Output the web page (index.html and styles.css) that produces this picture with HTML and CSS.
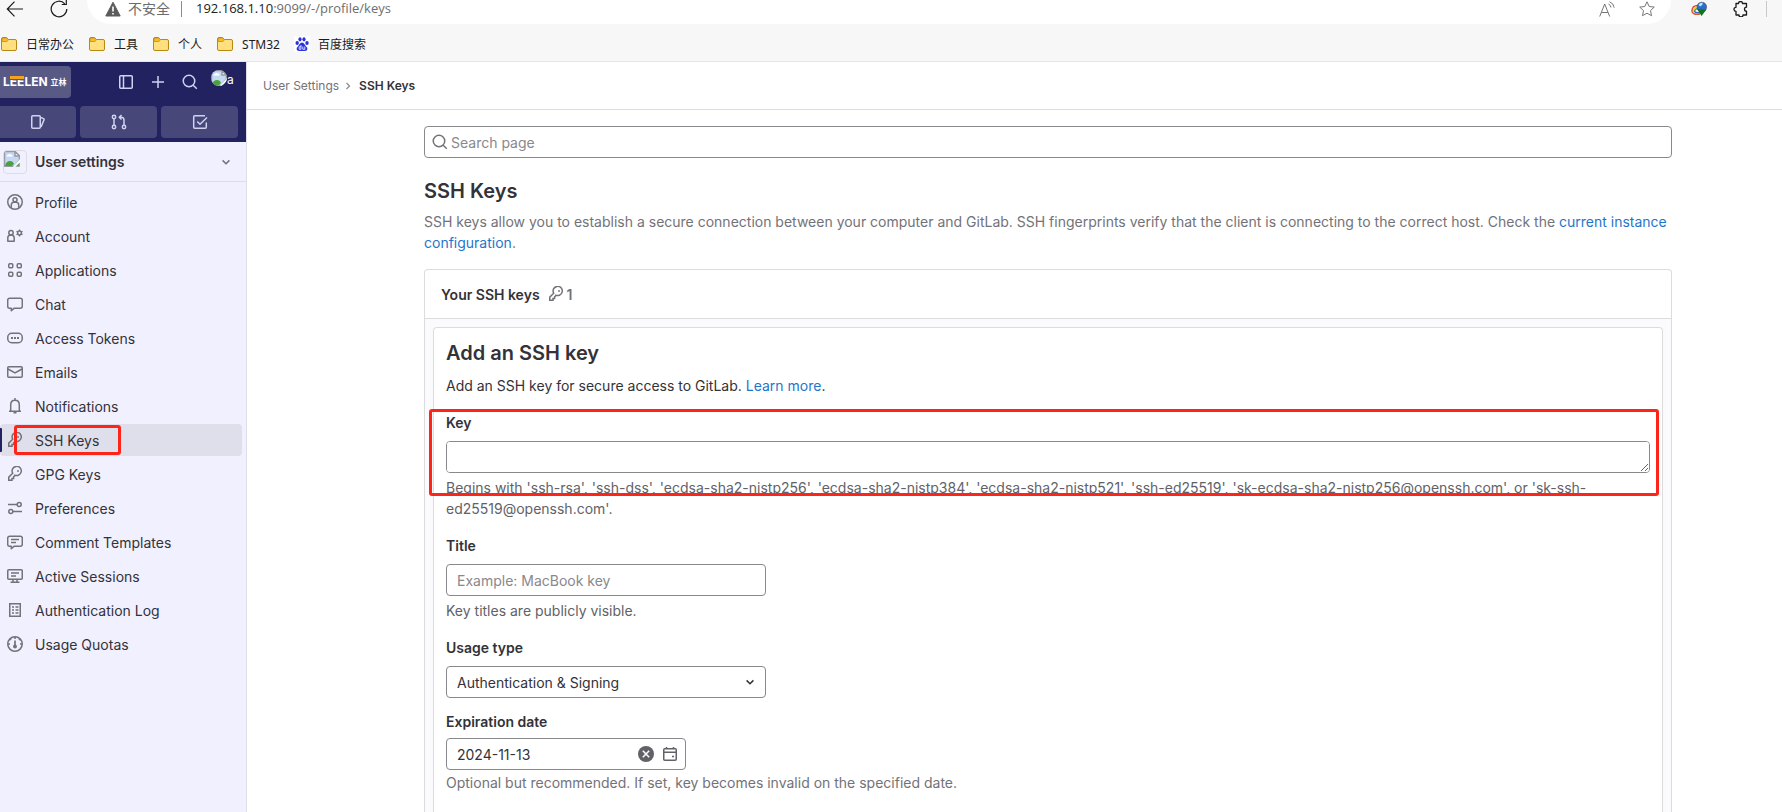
FILE: index.html
```
<!DOCTYPE html>
<html lang="en">
<head>
<meta charset="utf-8">
<title>SSH Keys · User Settings</title>
<link rel="stylesheet" href="styles.css">
</head>
<body>
<svg class="defs" aria-hidden="true">
  <symbol id="key" viewBox="0 0 16 16"><path d="M7.2 8.8 A4.6 4.6 0 1 0 5.7 7.2 L1.75 11.1 V14.25 H5 V12.6 H6.6 V10.9 L8.2 9.2"/><path d="M11 5h.01" stroke-width="1.8" stroke-linecap="round"/></symbol>
  <symbol id="search" viewBox="0 0 16 16"><circle cx="7" cy="7" r="5.75"/><path d="M11.2 11.2l3.6 3.6"/></symbol>
  <symbol id="chev" viewBox="0 0 16 16"><path d="M4.6 6.4L8 9.8l3.4-3.4"/></symbol>
  <symbol id="folder" viewBox="0 0 18 16"><path d="M1.5 13V3Q1.5 1.5 3 1.5h3.5l2 2H15q1.5 0 1.5 1.500v8q0 1.500-1.500 1.500H3Q1.500 14.500 1.500 13z" fill="#ffdf7e" stroke="#b98a13" stroke-width="1"/><path d="M2 5.500h5l1.500-2-2-1.500H3q-1 0-1 1z" fill="#f5bd2c" stroke="#b98a13" stroke-width=".7"/></symbol>
  <symbol id="broken" viewBox="0 0 16 16"><path d="M.5.500h10.500l4.500 4.500v4l-5 6.500H.5z" fill="#c5d9f5" stroke="#9a9aa0"/><path d="M11 .5v4.500h4.500z" fill="#fff" stroke="#9a9aa0"/><path d="M2.500 5.500q0-1.800 1.700-1.700 1-1.600 2.600-.3 1.900.2 1.700 2z" fill="#fff" stroke="none"/><path d="M1 15q1-5 5-5 3 0 4 3l-2 2z" fill="#4ba23a" stroke="none"/><path d="M16 8l-7 8h2l5-5z" fill="#fff" stroke="none"/><path d="M12 15.500h3.500V12z" fill="#4ba23a" stroke="#9a9aa0" stroke-width=".5"/></symbol>
</svg>

<header class="browser">
  <div class="toolbar">
    <button class="nav-btn" aria-label="Back"><svg class="ico" viewBox="0 0 18 18"><path d="M17 9H1.500M8.500 1.700L1.300 9l7.200 7.300" stroke-width="1.200"/></svg></button>
    <button class="nav-btn" aria-label="Refresh"><svg class="ico" viewBox="0 0 18 18"><path d="M16.800 9A7.800 7.800 0 1 1 14.800 3.800M11.800 4.500h4.500V0" stroke-width="1.200"/></svg></button>
    <div class="address">
      <svg class="warn" viewBox="0 0 16 16"><path d="M8 1.200L15.200 15H.8z" fill="#5c5c5c" stroke="#5c5c5c" stroke-linejoin="round"/><path d="M8 5.500v5M8 12v1.500" stroke="#fff" stroke-width="1.600"/></svg>
      <span class="insecure">不安全</span>
      <span class="bar"></span>
      <span class="url">192.168.1.10<span class="dim">:9099/-/profile/keys</span></span>
      <button class="nav-btn push" aria-label="Read aloud"><svg class="ico soft" viewBox="0 0 16 16"><path d="M.7 15.500L5.700 3l5 12.500M2.400 11.500h6.600M9.500 3q2.200 1 2.500 3.500M10.500 .7q4.200 1.600 4.700 6"/></svg></button>
      <button class="nav-btn" aria-label="Favorite"><svg class="ico soft" viewBox="0 0 16 16"><path d="M8 .8l2.200 4.700 5.100.6-3.800 3.500 1 5.100L8 12.200l-4.500 2.500 1-5.100L.7 6.100l5.100-.6z" stroke-linejoin="round"/></svg></button>
    </div>
    <button class="nav-btn" aria-label="Download manager"><svg class="ico dark" viewBox="0 0 16 16"><path d="M1 10Q1 4.500 7 4.500" stroke="#e3402d" stroke-width="1.300"/><path d="M2.300 10.300Q2.500 6 7 6" stroke="#f7d526" stroke-width="1.300"/><path d="M3.600 10.500Q4 7.300 7.500 7.300" stroke="#39a944" stroke-width="1.300"/><path d="M.8 9.500q.2 4.700 8.200 3.500" stroke="#e35b2d" stroke-width="1.500"/><path d="M3 10q2 2.500 6 1.500" stroke="#3b67c9" stroke-width="1.400"/><circle cx="10.800" cy="6" r="4.800" fill="#2f6bcb" stroke="#3a4f78" stroke-width=".6"/><path d="M7.500 4q1-2.500 4-2.200 1 1.700-1.500 3.200-1.500.7-2.500-1z" fill="#b9e3fa" stroke="none"/><path d="M6 8l4 .5V6.500l1 2h4.500L10.500 15z" fill="#12751c" stroke="none"/></svg></button>
    <button class="nav-btn" aria-label="Extensions"><svg class="ico dark" viewBox="0 0 16 16"><path d="M3 2.500h2.500a2 2 0 0 1 4 0H13.500v3.700a1.900 1.900 0 0 0 0 4V14H10a2 2 0 0 1-4 0H3V10.300a2 2 0 0 1 0-4z" stroke-width="1.300" stroke-linejoin="round"/></svg></button>
    <span class="bar light"></span>
  </div>
  <nav class="bookmarks" aria-label="Bookmarks">
    <a href="#"><svg class="fold"><use href="#folder"/></svg>日常办公</a>
    <a href="#"><svg class="fold"><use href="#folder"/></svg>工具</a>
    <a href="#"><svg class="fold"><use href="#folder"/></svg>个人</a>
    <a href="#"><svg class="fold"><use href="#folder"/></svg>STM32</a>
    <a href="#"><svg class="paw" viewBox="0 0 16 16"><rect width="16" height="16" fill="#fff"/><g fill="#2932e1"><ellipse cx="3.200" cy="7" rx="1.700" ry="2.100"/><ellipse cx="6" cy="3.300" rx="1.600" ry="2.100"/><ellipse cx="10" cy="3.300" rx="1.600" ry="2.100"/><ellipse cx="13" cy="7" rx="1.700" ry="2.100"/><path d="M8 6.500q1.500 0 2.700 2t2.500 3.200q.8 3.300-2.700 3.300h-5q-3.500 0-2.700-3.300Q4.100 10.500 5.300 8.500T8 6.500z"/></g><path d="M7 9v4.300H5.200v-2.500H7M8.800 10.500v2.800h2v-2.800" fill="none" stroke="#fff" stroke-width=".8"/></svg>百度搜索</a>
  </nav>
</header>

<div class="app">
  <aside class="sidebar">
    <div class="brand">
      <div class="brand-row">
        <a class="logo" href="#"><span class="logo-word">L<span class="capped">EE</span>LEN</span><span class="logo-cn">立林</span></a>
        <button aria-label="Collapse sidebar" class="tool first"><svg class="ico" viewBox="0 0 16 16"><rect x="1.750" y="1.750" width="12.500" height="12.500" rx="1"/><path d="M5.500 2v12"/></svg></button>
        <button aria-label="Create new" class="tool"><svg class="ico" viewBox="0 0 16 16"><path d="M8 2v12M2 8h12" stroke-width="1.500"/></svg></button>
        <button aria-label="Search" class="tool"><svg class="ico"><use href="#search"/></svg></button>
        <button aria-label="User menu" class="avatar-btn"><svg class="ico round"><use href="#broken"/></svg><span>a</span></button>
      </div>
      <div class="counts">
        <button aria-label="Issues"><svg class="ico" viewBox="0 0 16 16"><rect x="1.750" y="1.750" width="8.500" height="12.500" rx="1"/><path d="M10.500 3.500l2.700.9q1.200.4.8 1.500L11 13" /></svg></button>
        <button aria-label="Merge requests"><svg class="ico" viewBox="0 0 16 16"><circle cx="3" cy="3" r="1.700"/><circle cx="3" cy="13" r="1.700"/><circle cx="13" cy="13" r="1.700"/><path d="M3 5v6M13 11V6q0-2.700-2.700-2.700H8.500M10.500 1L8.300 3.300l2.200 2.300"/></svg></button>
        <button aria-label="To-Do List"><svg class="ico" viewBox="0 0 16 16"><path d="M14.300 8.500v4.800q0 1-1 1H2.700q-1 0-1-1V2.700q0-1 1-1H13"/><path d="M5.200 7.500L8 10.200l7-6.700"/></svg></button>
      </div>
    </div>
    <button class="context"><span class="ctx-img"><svg class="ico"><use href="#broken"/></svg></span><span class="ctx-name">User settings</span><svg class="ico push"><use href="#chev"/></svg></button>
    <nav class="menu" aria-label="User settings">
      <a href="#"><svg class="ico" viewBox="0 0 16 16"><circle cx="8" cy="8" r="7.250"/><circle cx="8" cy="5.700" r="2"/><path d="M4.300 13.800V11q0-2.800 2.500-2.800h2.400q2.500 0 2.500 2.800v2.800"/></svg>Profile</a>
      <a href="#"><svg class="ico" viewBox="0 0 16 16"><circle cx="4" cy="4.700" r="2.200"/><path d="M.8 13.200V10Q.8 7.200 3 7.200h2Q7.200 7.200 7.200 10v3.200z" stroke-linejoin="round"/><circle cx="12.500" cy="5" r="1.900"/><path d="M12.500 1.500v1.600M12.500 7v1.600M9.500 3.300l1.300.8M14.200 5.900l1.300.8M15.500 3.300l-1.300.8M10.800 5.900l-1.300.8" stroke-width="1.300"/></svg>Account</a>
      <a href="#"><svg class="ico" viewBox="0 0 16 16"><rect x="1.750" y="1.750" width="4" height="4" rx="1"/><rect x="10.250" y="1.750" width="4" height="4" rx="1"/><rect x="1.750" y="10.250" width="4" height="4" rx="1"/><rect x="10.250" y="10.250" width="4" height="4" rx="1"/></svg>Applications</a>
      <a href="#"><svg class="ico" viewBox="0 0 16 16"><path d="M4.300 12.200v2.500l3-2.500h6q2 0 2-2v-6q0-2-2-2H2.700q-2 0-2 2v6q0 2 1.600 2z" stroke-linejoin="round"/></svg>Chat</a>
      <a href="#"><svg class="ico" viewBox="0 0 16 16"><rect x=".75" y="3.250" width="14.500" height="9.500" rx="4"/><path d="M4 8h2M7 8h2M10 8h2" stroke-width="2"/></svg>Access Tokens</a>
      <a href="#"><svg class="ico" viewBox="0 0 16 16"><rect x=".75" y="2.750" width="14.500" height="10.500" rx="1"/><path d="M1 5l7 3.800L15 5"/></svg>Emails</a>
      <a href="#"><svg class="ico" viewBox="0 0 16 16"><path d="M8 0v2M2 13.250h12M3.700 13V7q0-4.700 4.300-4.700T12.300 7v6M6.500 14.800h3"/></svg>Notifications</a>
      <a href="#" class="active" aria-current="page"><svg class="ico"><use href="#key"/></svg>SSH Keys<span class="mark mark-nav"></span></a>
      <a href="#"><svg class="ico"><use href="#key"/></svg>GPG Keys</a>
      <a href="#"><svg class="ico" viewBox="0 0 16 16"><circle cx="12.200" cy="4.500" r="2"/><path d="M1 4.500h9M6 11.500h9"/><circle cx="3.800" cy="11.500" r="2"/></svg>Preferences</a>
      <a href="#"><svg class="ico" viewBox="0 0 16 16"><path d="M4.300 12.200v2.500l3-2.500h6q2 0 2-2v-6q0-2-2-2H2.700q-2 0-2 2v6q0 2 1.600 2z" stroke-linejoin="round"/><path d="M4 5.600h8M4 8.600h5"/></svg>Comment Templates</a>
      <a href="#"><svg class="ico" viewBox="0 0 16 16"><rect x=".75" y="1.750" width="14.500" height="9.500" rx="1"/><path d="M4 5h8M4 8h5M6 11.500v3M10 11.500v3M3.500 14.250h9"/></svg>Active Sessions</a>
      <a href="#"><svg class="ico" viewBox="0 0 16 16"><rect x="2.750" y="1.750" width="10.500" height="12.500"/><path d="M5 5h2M8.500 5h3M5 8h2M8.500 8h3M5 11h2M8.500 11h3"/></svg>Authentication Log</a>
      <a href="#"><svg class="ico" viewBox="0 0 16 16"><circle cx="8" cy="8" r="7.250"/><path d="M8 1v2M1 8h2M13 8h2M3 3l1 1M13 3l-1 1"/><path d="M8 4.500v6" stroke-width="1.700"/><circle cx="8" cy="10.500" r="1.200" fill="currentColor"/></svg>Usage Quotas</a>
    </nav>
  </aside>

  <div class="page">
    <nav class="crumbs" aria-label="Breadcrumb"><a href="#">User Settings</a><svg class="sep" viewBox="0 0 8 8"><path d="M2.500 1l3 3-3 3" stroke-width="1.200"/></svg><strong>SSH Keys</strong></nav>
    <main class="content">
      <div class="search"><svg class="ico"><use href="#search"/></svg><input type="search" placeholder="Search page" aria-label="Search page"></div>
      <h1>SSH Keys</h1>
      <p class="intro">SSH keys allow you to establish a secure connection between your computer and GitLab. SSH fingerprints verify that the client is connecting to the correct host. Check the <a href="#">current instance configuration</a>.</p>
      <section class="card">
        <header class="card-head"><h2>Your SSH keys</h2><svg class="ico"><use href="#key"/></svg><span class="count">1</span></header>
        <div class="card-body">
          <form class="form">
            <h3>Add an SSH key</h3>
            <p class="lead">Add an SSH key for secure access to GitLab. <a href="#">Learn more</a>.</p>
            <div class="field">
              <label for="k">Key</label>
              <textarea id="k" rows="1"></textarea>
              <p class="help">Begins with 'ssh-rsa', 'ssh-dss', 'ecdsa-sha2-nistp256', 'ecdsa-sha2-nistp384', 'ecdsa-sha2-nistp521', 'ssh-ed25519', 'sk-ecdsa-sha2-nistp256@openssh.com', or 'sk-ssh-ed25519@openssh.com'.</p>
              <span class="mark mark-key"></span>
            </div>
            <div class="field">
              <label for="t">Title</label>
              <input id="t" class="medium" type="text" placeholder="Example: MacBook key">
              <p class="help">Key titles are publicly visible.</p>
            </div>
            <div class="field">
              <label for="u">Usage type</label>
              <div class="select medium"><select id="u"><option>Authentication &amp; Signing</option></select><svg class="ico"><use href="#chev"/></svg></div>
            </div>
            <div class="field date-field">
              <label for="e">Expiration date</label>
              <div class="date"><input id="e" type="text" value="2024-11-13"><button type="button" aria-label="Clear date"><svg class="ico" viewBox="0 0 16 16"><circle cx="8" cy="8" r="8" fill="currentColor" stroke="none"/><path d="M4.800 4.800l6.400 6.400M11.200 4.800l-6.400 6.400" stroke="#fff"/></svg></button><button type="button" aria-label="Open calendar"><svg class="ico" viewBox="0 0 16 16"><rect x="1.750" y="2.750" width="12.500" height="11.500" rx="1"/><path d="M4.500 1v2M11.500 1v2M2 6.250h12M10 10.500h2" /></svg></button></div>
              <p class="help lighter">Optional but recommended. If set, key becomes invalid on the specified date.</p>
            </div>
          </form>
        </div>
      </section>
    </main>
  </div>
</div>
</body>
</html>
```

FILE: styles.css
```
* { box-sizing: border-box; }
body {
  margin: 0;
  height: 100vh;
  display: flex;
  flex-direction: column;
  overflow: hidden;
  background: #fff;
  color: #333238;
  font: 14px/21px Inter, "Noto Sans", sans-serif;
}
h1, h2, h3, p { margin: 0; }
a { color: #1f75cb; text-decoration: none; }
button { border: 0; padding: 0; background: none; color: inherit; font: inherit; display: flex; align-items: center; }
input, select, textarea {
  font: inherit;
  color: inherit;
  background: #fff;
  border: 1px solid #89888d;
  border-radius: 4px;
  height: 32px;
  padding: 0 10px;
  outline: 0;
}
::placeholder { color: #89888d; opacity: 1; }
.defs { position: absolute; width: 0; height: 0; }
.ico { display: block; width: 16px; height: 16px; flex: none; fill: none; stroke: currentColor; stroke-width: 1.5; }
.push { margin-left: auto; }
.mark { position: absolute; border: 3px solid #fd2419; border-radius: 3px; pointer-events: none; }

/* Browser chrome */
.browser {
  flex: none;
  background: #f7f7f7;
  border-bottom: 1px solid #e5e5e5;
  color: #1b1b1b;
  font-family: "Noto Sans", "Noto Sans CJK SC", sans-serif;
}
.toolbar { display: flex; height: 24px; padding: 0 15px 6px 6px; }
.toolbar > * { align-self: center; }
.toolbar .ico { width: 18px; height: 18px; stroke-width: 1; }
.toolbar .soft { width: 16px; height: 16px; color: #767676; }
.toolbar .dark { width: 16px; height: 16px; }
.toolbar > .nav-btn + .nav-btn { margin-left: 26px; }
.toolbar > .address {
  flex: 1;
  display: flex;
  align-items: center;
  align-self: flex-start;
  height: 24px;
  margin: 0 20px 0 19px;
  padding: 0 16px 7px 18px;
  background: #fff;
  border-radius: 0 0 24px 24px;
}
.warn { width: 16px; height: 16px; margin-right: 7px; }
.insecure { color: #6b6b6b; }
.bar { width: 1px; height: 16px; margin: 0 14px 0 11px; background: #8c8c8c; }
.bar.light { margin: 0 0 0 17px; background: #c8c8c8; }
.url { font-family: "Open Sans", "Noto Sans", sans-serif; font-size: 13px; }
.dim { color: #6e6e6e; }
.address .nav-btn + .nav-btn { margin-left: 24px; }
.bookmarks { display: flex; gap: 14px; height: 37px; align-items: center; padding-top: 3px; font-size: 12px; }
.bookmarks a { display: flex; align-items: center; gap: 8px; color: #1b1b1b; }
.fold { width: 18px; height: 16px; }
.paw { width: 16px; height: 16px; }

/* Sidebar */
.app { flex: 1; display: flex; min-height: 0; }
.sidebar { width: 247px; flex: none; background: #f1f0ff; border-right: 1px solid #dedee6; }
.brand { background: #222261; color: #d1d1f0; padding: 4px 8px 4px 0; }
.brand-row { display: flex; align-items: center; height: 32px; }
.logo {
  display: flex;
  align-items: center;
  gap: 3px;
  width: 71px;
  height: 32px;
  padding-left: 3px;
  background: #595986;
  border-radius: 0 4px 4px 0;
  color: #fff;
}
.logo-word { font-size: 12px; line-height: 16px; font-weight: 700; }
.capped { position: relative; }
.capped::after { content: ""; position: absolute; left: 0; right: 0; top: 2px; height: 3px; background: #f2a41f; border-bottom: 1px solid #595986; }
.logo-cn { font: 700 8px/12px "Noto Sans CJK SC", sans-serif; }
.tool { width: 32px; height: 32px; justify-content: center; }
.tool.first { margin-left: 39px; }
.avatar-btn { align-items: flex-start; height: 24px; margin-left: 5px; font-size: 12px; line-height: 20px; color: #fff; }
.round { border-radius: 8px; }
.counts { display: grid; grid-template-columns: 76px 1fr 1fr; gap: 4px; margin-top: 8px; }
.counts button { height: 32px; justify-content: center; background: #474779; border-radius: 4px; }
.counts button:first-child { border-radius: 0 4px 4px 0; }
.context { width: 100%; height: 40px; padding: 0 12px 0 3px; border-bottom: 1px solid #dedee9; color: #737278; text-align: left; }
.ctx-img { width: 24px; height: 24px; overflow: hidden; border: 1px solid #dcdce4; border-radius: 4px; margin-right: 8px; }
.ctx-name { font-weight: 600; color: #333238; }
.menu { display: flex; flex-direction: column; gap: 2px; padding: 4px 4px 0 0; }
.menu a { position: relative; display: flex; align-items: center; gap: 12px; height: 32px; padding-left: 7px; color: #333238; border-radius: 4px; }
.menu .ico { color: #737278; }
.menu .active { background: #dfdfec; }
.active::before { content: ""; position: absolute; left: 0; top: 4px; width: 2px; height: 24px; background: #222261; border-radius: 0 1px 1px 0; }
.mark-nav { left: 14px; top: 1px; width: 107px; height: 30px; }

/* Page */
.page { flex: 1; min-width: 0; display: flex; flex-direction: column; }
.crumbs { display: flex; align-items: center; flex: none; height: 48px; padding-left: 16px; border-bottom: 1px solid #dcdcde; font-size: 12px; }
.crumbs a { color: #737278; }
.crumbs strong { font-weight: 600; }
.sep { width: 8px; height: 8px; margin: 0 7px 0 5px; fill: none; stroke: #89888d; }
.content { flex: 1; display: flex; flex-direction: column; padding: 16px 110px 0 177px; }
.search { position: relative; display: flex; flex: none; }
.search input { width: 100%; padding-left: 26px; }
.search .ico { position: absolute; left: 8px; top: 8px; color: #737278; }
h1, h3 { font-size: 20px; line-height: 24px; font-weight: 600; }
h1 { margin-top: 21px; }
.intro { margin-top: 8px; color: #737278; }
.card { flex: 1 0 auto; display: flex; flex-direction: column; margin-top: 16px; border: 1px solid #dcdcde; border-bottom: 0; border-radius: 4px 4px 0 0; }
.card-head { display: flex; align-items: center; height: 49px; padding: 0 16px; border-bottom: 1px solid #dcdcde; color: #737278; }
.card-head h2 { font-size: 14px; line-height: 21px; font-weight: 600; color: #333238; margin-right: 8px; }
.count { margin-left: 3px; font-weight: 600; }
.card-body { flex: 1; display: flex; padding: 8px 8px 0; background: #fbfafd; }
.form { flex: 1; padding: 13px 12px 0; background: #fff; border: 1px solid #dcdcde; border-bottom: 0; border-radius: 4px 4px 0 0; }
.lead { margin-top: 10px; }
.field { position: relative; display: flex; flex-direction: column; align-items: flex-start; margin-top: 16px; }
label { font-weight: 600; margin-bottom: 8px; }
textarea { display: block; width: 100%; padding: 5px 10px; resize: vertical; }
.help { margin-top: 4px; color: #626168; }
.lighter { color: #737278; margin-top: 2px; }
.medium { width: 320px; }
.select { position: relative; }
.select select { width: 100%; appearance: none; }
.select .ico { position: absolute; right: 8px; top: 8px; pointer-events: none; }
.date-field { margin-top: 13px; }
.date-field label { margin-bottom: 6px; }
.date { position: relative; width: 240px; }
.date input { width: 100%; }
.date button { position: absolute; top: 8px; right: 8px; color: #626168; }
.date button:first-of-type { right: 32px; }
.mark-key { left: -17px; right: -9px; top: -3px; height: 87px; }
```
